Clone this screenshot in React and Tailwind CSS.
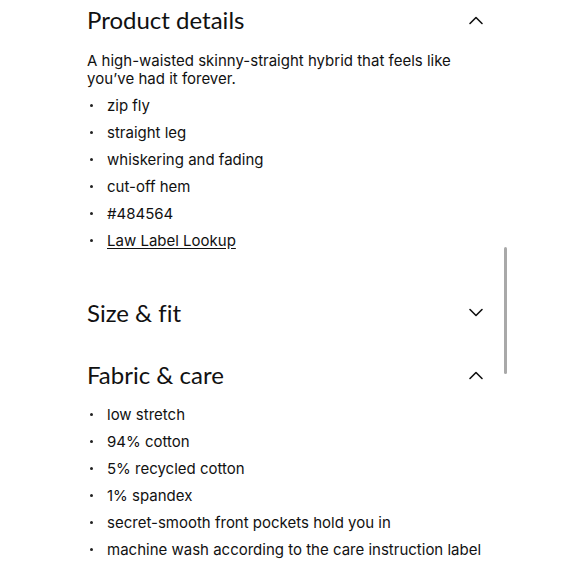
import React from "react";

const Chevron = ({ up }) => (
  <svg width="16" height="10" viewBox="0 0 16 10" fill="none" className="shrink-0">
    {up ? (
      <path d="M2 8.5L8 2.5L14 8.5" stroke="#111" strokeWidth="1.6" strokeLinecap="round" strokeLinejoin="round" />
    ) : (
      <path d="M2 1.5L8 7.5L14 1.5" stroke="#111" strokeWidth="1.6" strokeLinecap="round" strokeLinejoin="round" />
    )}
  </svg>
);

const Header = ({ title, up, className }) => (
  <div className={`flex items-center justify-between h-[32px] pr-[96px] ${className}`}>
    <h2
      className="text-[24px] leading-[32px] text-[#111] [font-variant-ligatures:none]"
      style={{ fontFamily: "Lato, Inter, sans-serif" }}
    >
      {title}
    </h2>
    <Chevron up={up} />
  </div>
);

const Bullets = ({ items, className }) => (
  <ul className={className}>
    {items.map((item, i) => (
      <li key={i} className="flex items-center text-[15px] leading-[27px] text-[#111]">
        <span className="flex w-[20px] pl-[3px]">
          <span className="w-[2.5px] h-[2.5px] rounded-full bg-[#222]" />
        </span>
        {item}
      </li>
    ))}
  </ul>
);

const App = () => {
  return (
    <div
      className="relative w-[580px] h-[580px] overflow-hidden bg-white pl-[87px]"
      style={{ fontFamily: "Inter, 'Noto Sans', sans-serif" }}
    >
      {/* Product details */}
      <Header title="Product details" up className="mt-[4px]" />
      <p className="mt-[16px] w-[390px] text-[15px] leading-[18px] text-[#111]">
        A high-waisted skinny-straight hybrid that feels like you’ve had it forever.
      </p>
      <Bullets
        className="mt-[4px]"
        items={[
          "zip fly",
          "straight leg",
          "whiskering and fading",
          "cut-off hem",
          "#484564",
          <span className="underline underline-offset-2">Law Label Lookup</span>,
        ]}
      />

      {/* Size & fit */}
      <Header title="Size & fit" className="mt-[43px]" />

      {/* Fabric & care */}
      <Header title="Fabric & care" up className="mt-[30px]" />
      <Bullets
        className="mt-[10px]"
        items={[
          "low stretch",
          "94% cotton",
          "5% recycled cotton",
          "1% spandex",
          "secret-smooth front pockets hold you in",
          "machine wash according to the care instruction label",
        ]}
      />

      {/* scrollbar */}
      <div className="absolute left-[504px] top-[247px] w-[3px] h-[127px] rounded-full bg-[#a9a9a9]" />
    </div>
  );
};

export default App;
